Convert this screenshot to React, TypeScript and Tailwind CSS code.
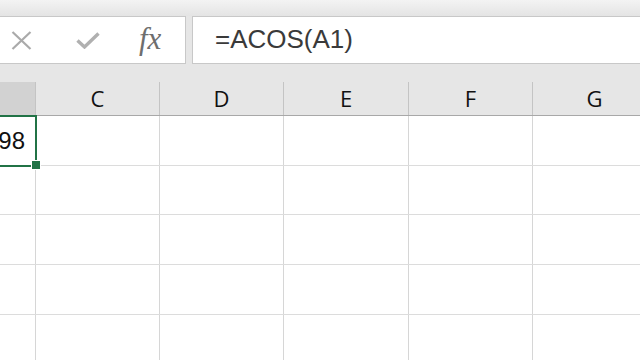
import React from "react";

const cols = [
  { label: "", w: "w-[36px]", sel: true },
  { label: "C", w: "w-[124px]" },
  { label: "D", w: "w-[124px]" },
  { label: "E", w: "w-[125px]" },
  { label: "F", w: "w-[124px]" },
  { label: "G", w: "w-[124px]" },
];

const rowHeights = ["h-[50px]", "h-[49px]", "h-[50px]", "h-[50px]", "h-[50px]"];

export default function App() {
  return (
    <div className="relative w-[640px] h-[360px] overflow-hidden bg-[#e6e6e6] font-['Open_Sans',sans-serif]">
      {/* top band */}
      <div className="h-[16px] bg-gradient-to-b from-[#f3f3f3] to-[#e4e4e4]" />
      {/* formula bar */}
      <div className="flex h-[48px] gap-[6px]">
        <div className="-ml-[10px] w-[196px] h-full bg-white border border-[#c8c8c8] flex items-center">
          <div className="w-[21px] ml-[20px] flex items-center justify-center">
            <svg width="21" height="19" viewBox="0 0 21 19">
              <path d="M1.5 1 L19.5 18 M19.5 1 L1.5 18" stroke="#aaaaaa" strokeWidth="2.2" fill="none" />
            </svg>
          </div>
          <div className="ml-[44px] w-[24px] flex items-center justify-center">
            <svg width="24" height="17" viewBox="0 0 24 17">
              <path d="M1.5 8.5 L8.5 15 L22.5 1.5" stroke="#b0b0b0" strokeWidth="3.4" fill="none" />
            </svg>
          </div>
          <div className="ml-[39px] italic text-[#6e6e6e] text-[31px] leading-none font-['Liberation_Serif',serif] -mt-[4px]">
            fx
          </div>
        </div>
        <div className="flex-1 -mr-[10px] h-full bg-white border border-[#c8c8c8] flex items-center pl-[22px]">
          <span className="text-[26px] leading-none text-[#3a3a3a] font-['Liberation_Sans',sans-serif] -mt-[2px]">
            =ACOS(A1)
          </span>
        </div>
      </div>
      {/* gap */}
      <div className="h-[18px]" />
      {/* header row */}
      <div className="flex h-[34px] border-b border-[#a8a8a8] bg-[#e6e6e6]">
        {cols.map((c, i) => (
          <div
            key={i}
            className={`${c.w} shrink-0 h-full flex items-center justify-center text-[22px] text-[#111] border-r border-[#c4c4c4] ${c.sel ? "bg-[#d2d2d2]" : ""}`}
          >
            <span className="-mt-[1px]">{c.label}</span>
          </div>
        ))}
      </div>
      {/* grid */}
      <div className="bg-white">
        {rowHeights.map((h, r) => (
          <div key={r} className={`flex ${h} border-b border-[#dcdcdc]`}>
            {cols.map((c, i) => (
              <div
                key={i}
                className={`${c.w} shrink-0 h-full border-r border-[#d6d6d6] flex items-center justify-end pr-[11px]`}
              >
                {r === 0 && i === 0 ? (
                  <span className="text-[24px] leading-none text-[#111] font-['Liberation_Sans',sans-serif] -mr-[1px]">
                    98
                  </span>
                ) : null}
              </div>
            ))}
          </div>
        ))}
      </div>
      {/* selection */}
      <div className="absolute left-[-10px] top-[115px] w-[47px] h-[52px] border-2 border-[#217346]" />
      <div className="absolute left-[32px] top-[161px] w-[8px] h-[8px] bg-[#217346] outline outline-1 outline-white" />
    </div>
  );
}
